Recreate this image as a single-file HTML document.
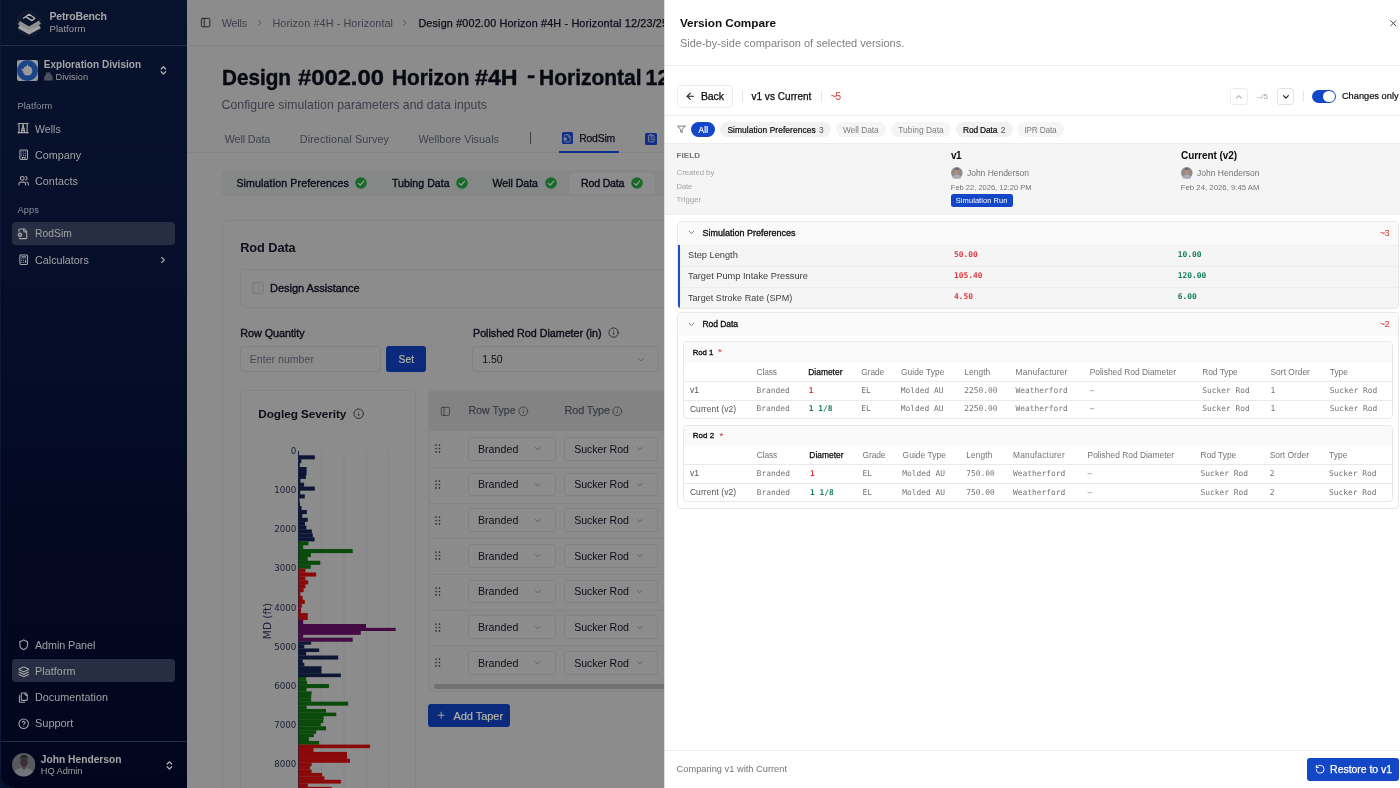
<!DOCTYPE html>
<html lang="en">
<head>
<meta charset="utf-8">
<title>Version Compare</title>
<style>
*{box-sizing:border-box;margin:0;padding:0}
html,body{width:1400px;height:788px;overflow:hidden;background:#8c8c8c;font-family:"Liberation Sans",sans-serif}
.abs,.t,.b{position:absolute}
.t{white-space:pre;z-index:3}
svg{overflow:visible}
#side{position:absolute;left:0;top:0;width:186.5px;height:788px;background:linear-gradient(180deg,#07122d 0%,#06102b 30%,#03071f 75%,#02051e 100%);overflow:hidden}
#side .sin{will-change:transform;position:absolute;left:0;top:0;width:187px;height:788px}
#main{position:absolute;left:186.5px;top:0;width:477.5px;height:788px;background:#8c8c8c;overflow:hidden}
#main .in{will-change:transform;position:absolute;left:-186.5px;top:0;width:1400px;height:788px}
#panel{position:absolute;left:664px;top:0;width:736px;height:788px;background:#fff;overflow:hidden}
#panel .in{will-change:transform;position:absolute;left:-664px;top:0;width:1400px;height:788px}
.ico{position:absolute;fill:none;stroke-linecap:round;stroke-linejoin:round}
.sel{position:absolute;height:23.6px;border:1px solid #818181;border-radius:3px;background:#8c8c8c}
.pill{position:absolute;top:122.3px;height:14.8px;border-radius:8px;background:#f1f1f1}
.hl{position:absolute;background:#ededed;height:1px}
</style>
</head>
<body>
<!-- ================= MAIN (dimmed) ================= -->
<div id="main"><div class="in">
  <div class="b" style="left:186px;top:45px;width:480px;height:1px;background:#838383"></div>
  <div class="b" style="left:186px;top:152px;width:480px;height:1px;background:#838383"></div>
  <div class="b" style="left:558.8px;top:150.8px;width:60.4px;height:2px;background:#0f2d8a"></div>
  <div class="b" style="left:529.6px;top:132px;width:1px;height:12px;background:#3a3a3a"></div>
  <!-- subtabs bar -->
  <div class="b" style="left:221.6px;top:170.4px;width:460px;height:26px;background:#868787;border-radius:4px"></div>
  <div class="b" style="left:568.6px;top:173.4px;width:86px;height:20.6px;background:#8d8d8d;border-radius:4px"></div>
  <!-- card -->
  <div class="b" style="left:221.6px;top:219.8px;width:470px;height:600px;border:1px solid #848484;border-radius:5px;background:#8c8c8c"></div>
  <div class="b" style="left:240.2px;top:269px;width:440px;height:39px;border:1px solid #848484;border-radius:5px"></div>
  <div class="b" style="left:252.2px;top:282.3px;width:11.7px;height:11.7px;border:1px solid #7c7c7c;border-radius:3px;background:#8a8a8a"></div>
  <div class="b" style="left:240.2px;top:346.4px;width:141px;height:25.5px;border:1px solid #818181;border-radius:4px"></div>
  <div class="b" style="left:386.2px;top:346.4px;width:39.6px;height:25.5px;background:#0b2a7c;border-radius:3px"></div>
  <div class="b" style="left:472.4px;top:346.4px;width:186.6px;height:25.5px;border:1px solid #818181;border-radius:4px"></div>
  <!-- dogleg card -->
  <div class="b" style="left:240.2px;top:389.6px;width:176px;height:420px;border:1px solid #848484;border-radius:6px"></div>
  <!-- table -->
  <div class="b" style="left:428.4px;top:389.6px;width:260px;height:302px;border:1px solid #848484;border-radius:5px;overflow:hidden;background:#8b8b8b">
    <div class="b" style="left:0;top:0;width:260px;height:40.6px;background:#838383"></div>
    <div class="b" style="left:0;top:76.3px;width:260px;height:1px;background:#838383"></div>
    <div class="b" style="left:0;top:112px;width:260px;height:1px;background:#838383"></div>
    <div class="b" style="left:0;top:147.6px;width:260px;height:1px;background:#838383"></div>
    <div class="b" style="left:0;top:183.3px;width:260px;height:1px;background:#838383"></div>
    <div class="b" style="left:0;top:219px;width:260px;height:1px;background:#838383"></div>
    <div class="b" style="left:0;top:254.6px;width:260px;height:1px;background:#838383"></div>
    <div class="b" style="left:5px;top:293.6px;width:260px;height:4.8px;background:#717171;border-radius:3px"></div>
  </div>
  <!--ROWS-->
  <div class="b" style="left:428px;top:704px;width:82px;height:23.2px;background:#0b2a7c;border-radius:3px"></div>
  <svg class="ico" style="left:199.6px;top:17.2px;" width="11.2" height="11.2" viewBox="0 0 24 24" stroke="#1c1c1c" stroke-width="1.9"><rect width="18" height="18" x="3" y="3" rx="2"/><path d="M9 3v18"/></svg>
<svg class="ico" style="left:254.6px;top:18.1px;" width="9.5" height="9.5" viewBox="0 0 24 24" stroke="#454545" stroke-width="2"><path d="m9 18 6-6-6-6"/></svg>
<svg class="ico" style="left:400.2px;top:18.1px;" width="9.5" height="9.5" viewBox="0 0 24 24" stroke="#454545" stroke-width="2"><path d="m9 18 6-6-6-6"/></svg>
<div class="b" style="left:561.5px;top:132px;width:11.6px;height:11.8px;background:#0f2d8a;border-radius:1.5px"></div>
<svg class="ico" style="left:563.0px;top:133.6px;" width="8.6" height="8.6" viewBox="0 0 24 24" stroke="#8f8f8f" stroke-width="2.2"><path d="M14 2v4a2 2 0 0 0 2 2h4"/><path d="m3.2 12.9-.9-.4"/><path d="m3.2 15.1-.9.4"/><path d="M4.677 21.5a2 2 0 0 0 1.313.5H18a2 2 0 0 0 2-2V7l-5-5H6a2 2 0 0 0-2 2v2.5"/><path d="m4.9 11.2-.4-.9"/><path d="m4.9 16.8-.4.9"/><path d="m7.5 10.3-.4.9"/><path d="m7.5 17.7-.4-.9"/><path d="m9.7 12.5-.9.4"/><path d="m9.7 15.5-.9-.4"/><circle cx="6" cy="14" r="3"/></svg>
<div class="b" style="left:645.3px;top:132.8px;width:11.6px;height:11.8px;background:#0f2d8a;border-radius:1.5px"></div>
<svg class="ico" style="left:646.8px;top:134.4px;" width="8.6" height="8.6" viewBox="0 0 24 24" stroke="#8f8f8f" stroke-width="2.2"><rect width="8" height="4" x="8" y="2" rx="1" ry="1"/><path d="M16 4h2a2 2 0 0 1 2 2v14a2 2 0 0 1-2 2H6a2 2 0 0 1-2-2V6a2 2 0 0 1 2-2h2"/><path d="M12 11h4M12 16h4M8 11h.01M8 16h.01"/></svg>
<svg class="ico" style="left:355.0px;top:177.3px" width="12" height="12" viewBox="0 0 24 24"><circle cx="12" cy="12" r="11.6" fill="#166b2b"/><path d="m6.8 12.6 3.6 3.6 7-8" stroke="#9f9f9f" stroke-width="2.3" fill="none"/></svg>
<svg class="ico" style="left:455.5px;top:177.3px" width="12" height="12" viewBox="0 0 24 24"><circle cx="12" cy="12" r="11.6" fill="#166b2b"/><path d="m6.8 12.6 3.6 3.6 7-8" stroke="#9f9f9f" stroke-width="2.3" fill="none"/></svg>
<svg class="ico" style="left:544.6px;top:177.3px" width="12" height="12" viewBox="0 0 24 24"><circle cx="12" cy="12" r="11.6" fill="#166b2b"/><path d="m6.8 12.6 3.6 3.6 7-8" stroke="#9f9f9f" stroke-width="2.3" fill="none"/></svg>
<svg class="ico" style="left:630.6px;top:177.3px" width="12" height="12" viewBox="0 0 24 24"><circle cx="12" cy="12" r="11.6" fill="#166b2b"/><path d="m6.8 12.6 3.6 3.6 7-8" stroke="#9f9f9f" stroke-width="2.3" fill="none"/></svg>
<svg class="ico" style="left:608.3px;top:327.3px;" width="11.2" height="11.2" viewBox="0 0 24 24" stroke="#2e2e2e" stroke-width="2.1"><circle cx="12" cy="12" r="10"/><path d="M12 16v-4"/><path d="M12 8h.01"/></svg>
<svg class="ico" style="left:353.1px;top:408.3px;" width="11.4" height="11.4" viewBox="0 0 24 24" stroke="#2e2e2e" stroke-width="2.1"><circle cx="12" cy="12" r="10"/><path d="M12 16v-4"/><path d="M12 8h.01"/></svg>
<svg class="ico" style="left:636.2px;top:354.6px;" width="9.6" height="9.6" viewBox="0 0 24 24" stroke="#555" stroke-width="2"><path d="m6 9 6 6 6-6"/></svg>
<svg class="ico" style="left:439.5px;top:405.6px;" width="10.8" height="10.8" viewBox="0 0 24 24" stroke="#3a3a3a" stroke-width="1.9"><rect width="18" height="18" x="3" y="3" rx="2"/><path d="M9 3v18"/></svg>
<svg class="ico" style="left:518.4px;top:405.7px;" width="10.6" height="10.6" viewBox="0 0 24 24" stroke="#3a3a3a" stroke-width="1.9"><circle cx="12" cy="12" r="10"/><path d="M12 16v-4"/><path d="M12 8h.01"/></svg>
<svg class="ico" style="left:612.3px;top:405.7px;" width="10.6" height="10.6" viewBox="0 0 24 24" stroke="#3a3a3a" stroke-width="1.9"><circle cx="12" cy="12" r="10"/><path d="M12 16v-4"/><path d="M12 8h.01"/></svg>
<div class="sel" style="left:468.3px;top:437.1px;width:87.3px"></div>
<div class="sel" style="left:564.4px;top:437.1px;width:93.3px"></div>
<svg class="ico" style="left:532.8px;top:444.3px;" width="9.4" height="9.4" viewBox="0 0 24 24" stroke="#555" stroke-width="2"><path d="m6 9 6 6 6-6"/></svg>
<svg class="ico" style="left:634.8px;top:444.3px;" width="9.4" height="9.4" viewBox="0 0 24 24" stroke="#555" stroke-width="2"><path d="m6 9 6 6 6-6"/></svg>
<svg class="ico" style="left:434.8px;top:444.3px;fill:#2e2e2e;stroke:none" width="5.6" height="9" viewBox="0 0 5.6 9"><circle cx="1.1" cy="1.1" r="0.85"/><circle cx="1.1" cy="4.5" r="0.85"/><circle cx="1.1" cy="7.9" r="0.85"/><circle cx="4.5" cy="1.1" r="0.85"/><circle cx="4.5" cy="4.5" r="0.85"/><circle cx="4.5" cy="7.9" r="0.85"/></svg>
<div class="sel" style="left:468.3px;top:472.8px;width:87.3px"></div>
<div class="sel" style="left:564.4px;top:472.8px;width:93.3px"></div>
<svg class="ico" style="left:532.8px;top:480.0px;" width="9.4" height="9.4" viewBox="0 0 24 24" stroke="#555" stroke-width="2"><path d="m6 9 6 6 6-6"/></svg>
<svg class="ico" style="left:634.8px;top:480.0px;" width="9.4" height="9.4" viewBox="0 0 24 24" stroke="#555" stroke-width="2"><path d="m6 9 6 6 6-6"/></svg>
<svg class="ico" style="left:434.8px;top:480.0px;fill:#2e2e2e;stroke:none" width="5.6" height="9" viewBox="0 0 5.6 9"><circle cx="1.1" cy="1.1" r="0.85"/><circle cx="1.1" cy="4.5" r="0.85"/><circle cx="1.1" cy="7.9" r="0.85"/><circle cx="4.5" cy="1.1" r="0.85"/><circle cx="4.5" cy="4.5" r="0.85"/><circle cx="4.5" cy="7.9" r="0.85"/></svg>
<div class="sel" style="left:468.3px;top:508.4px;width:87.3px"></div>
<div class="sel" style="left:564.4px;top:508.4px;width:93.3px"></div>
<svg class="ico" style="left:532.8px;top:515.6px;" width="9.4" height="9.4" viewBox="0 0 24 24" stroke="#555" stroke-width="2"><path d="m6 9 6 6 6-6"/></svg>
<svg class="ico" style="left:634.8px;top:515.6px;" width="9.4" height="9.4" viewBox="0 0 24 24" stroke="#555" stroke-width="2"><path d="m6 9 6 6 6-6"/></svg>
<svg class="ico" style="left:434.8px;top:515.6px;fill:#2e2e2e;stroke:none" width="5.6" height="9" viewBox="0 0 5.6 9"><circle cx="1.1" cy="1.1" r="0.85"/><circle cx="1.1" cy="4.5" r="0.85"/><circle cx="1.1" cy="7.9" r="0.85"/><circle cx="4.5" cy="1.1" r="0.85"/><circle cx="4.5" cy="4.5" r="0.85"/><circle cx="4.5" cy="7.9" r="0.85"/></svg>
<div class="sel" style="left:468.3px;top:544.1px;width:87.3px"></div>
<div class="sel" style="left:564.4px;top:544.1px;width:93.3px"></div>
<svg class="ico" style="left:532.8px;top:551.3px;" width="9.4" height="9.4" viewBox="0 0 24 24" stroke="#555" stroke-width="2"><path d="m6 9 6 6 6-6"/></svg>
<svg class="ico" style="left:634.8px;top:551.3px;" width="9.4" height="9.4" viewBox="0 0 24 24" stroke="#555" stroke-width="2"><path d="m6 9 6 6 6-6"/></svg>
<svg class="ico" style="left:434.8px;top:551.3px;fill:#2e2e2e;stroke:none" width="5.6" height="9" viewBox="0 0 5.6 9"><circle cx="1.1" cy="1.1" r="0.85"/><circle cx="1.1" cy="4.5" r="0.85"/><circle cx="1.1" cy="7.9" r="0.85"/><circle cx="4.5" cy="1.1" r="0.85"/><circle cx="4.5" cy="4.5" r="0.85"/><circle cx="4.5" cy="7.9" r="0.85"/></svg>
<div class="sel" style="left:468.3px;top:579.7px;width:87.3px"></div>
<div class="sel" style="left:564.4px;top:579.7px;width:93.3px"></div>
<svg class="ico" style="left:532.8px;top:586.9px;" width="9.4" height="9.4" viewBox="0 0 24 24" stroke="#555" stroke-width="2"><path d="m6 9 6 6 6-6"/></svg>
<svg class="ico" style="left:634.8px;top:586.9px;" width="9.4" height="9.4" viewBox="0 0 24 24" stroke="#555" stroke-width="2"><path d="m6 9 6 6 6-6"/></svg>
<svg class="ico" style="left:434.8px;top:586.9px;fill:#2e2e2e;stroke:none" width="5.6" height="9" viewBox="0 0 5.6 9"><circle cx="1.1" cy="1.1" r="0.85"/><circle cx="1.1" cy="4.5" r="0.85"/><circle cx="1.1" cy="7.9" r="0.85"/><circle cx="4.5" cy="1.1" r="0.85"/><circle cx="4.5" cy="4.5" r="0.85"/><circle cx="4.5" cy="7.9" r="0.85"/></svg>
<div class="sel" style="left:468.3px;top:615.4px;width:87.3px"></div>
<div class="sel" style="left:564.4px;top:615.4px;width:93.3px"></div>
<svg class="ico" style="left:532.8px;top:622.6px;" width="9.4" height="9.4" viewBox="0 0 24 24" stroke="#555" stroke-width="2"><path d="m6 9 6 6 6-6"/></svg>
<svg class="ico" style="left:634.8px;top:622.6px;" width="9.4" height="9.4" viewBox="0 0 24 24" stroke="#555" stroke-width="2"><path d="m6 9 6 6 6-6"/></svg>
<svg class="ico" style="left:434.8px;top:622.6px;fill:#2e2e2e;stroke:none" width="5.6" height="9" viewBox="0 0 5.6 9"><circle cx="1.1" cy="1.1" r="0.85"/><circle cx="1.1" cy="4.5" r="0.85"/><circle cx="1.1" cy="7.9" r="0.85"/><circle cx="4.5" cy="1.1" r="0.85"/><circle cx="4.5" cy="4.5" r="0.85"/><circle cx="4.5" cy="7.9" r="0.85"/></svg>
<div class="sel" style="left:468.3px;top:651.1px;width:87.3px"></div>
<div class="sel" style="left:564.4px;top:651.1px;width:93.3px"></div>
<svg class="ico" style="left:532.8px;top:658.3px;" width="9.4" height="9.4" viewBox="0 0 24 24" stroke="#555" stroke-width="2"><path d="m6 9 6 6 6-6"/></svg>
<svg class="ico" style="left:634.8px;top:658.3px;" width="9.4" height="9.4" viewBox="0 0 24 24" stroke="#555" stroke-width="2"><path d="m6 9 6 6 6-6"/></svg>
<svg class="ico" style="left:434.8px;top:658.3px;fill:#2e2e2e;stroke:none" width="5.6" height="9" viewBox="0 0 5.6 9"><circle cx="1.1" cy="1.1" r="0.85"/><circle cx="1.1" cy="4.5" r="0.85"/><circle cx="1.1" cy="7.9" r="0.85"/><circle cx="4.5" cy="1.1" r="0.85"/><circle cx="4.5" cy="4.5" r="0.85"/><circle cx="4.5" cy="7.9" r="0.85"/></svg>
<svg class="ico" style="left:436.2px;top:710.3px;" width="10.4" height="10.4" viewBox="0 0 24 24" stroke="#b4b4a4" stroke-width="2"><path d="M5 12h14"/><path d="M12 5v14"/></svg>
  <svg style="position:absolute;left:240px;top:430px" width="176" height="358" viewBox="240 430 176 358">
<rect x="321" y="451" width="1" height="340" fill="#848484"/>
<rect x="343.5" y="451" width="1" height="340" fill="#848484"/>
<rect x="366" y="451" width="1" height="340" fill="#848484"/>
<rect x="388.5" y="451" width="1" height="340" fill="#848484"/>
<rect x="298.0" y="451" width="1" height="340" fill="#1a2140"/>
<rect x="298.6" y="455.31" width="16.22" height="4.06" fill="#0d1633"/>
<rect x="298.6" y="459.21" width="2.74" height="4.06" fill="#0d1633"/>
<rect x="298.6" y="463.12" width="1.14" height="4.06" fill="#0d1633"/>
<rect x="298.6" y="467.02" width="7.99" height="4.06" fill="#0d1633"/>
<rect x="298.6" y="470.93" width="7.99" height="4.06" fill="#0d1633"/>
<rect x="298.6" y="474.84" width="7.31" height="4.06" fill="#0d1633"/>
<rect x="298.6" y="478.74" width="1.83" height="4.06" fill="#0d1633"/>
<rect x="298.6" y="482.65" width="5.48" height="4.06" fill="#0d1633"/>
<rect x="298.6" y="486.55" width="16.22" height="4.06" fill="#0d1633"/>
<rect x="298.6" y="490.46" width="1.60" height="4.06" fill="#0d1633"/>
<rect x="298.6" y="494.36" width="6.17" height="4.06" fill="#0d1633"/>
<rect x="298.6" y="498.27" width="0.91" height="4.06" fill="#0d1633"/>
<rect x="298.6" y="502.18" width="1.37" height="4.06" fill="#0d1633"/>
<rect x="298.6" y="506.08" width="2.97" height="4.06" fill="#0d1633"/>
<rect x="298.6" y="509.99" width="8.22" height="4.06" fill="#0d1633"/>
<rect x="298.6" y="513.89" width="3.65" height="4.06" fill="#0d1633"/>
<rect x="298.6" y="517.80" width="9.14" height="4.06" fill="#0d1633"/>
<rect x="298.6" y="521.71" width="6.40" height="4.06" fill="#0d1633"/>
<rect x="298.6" y="525.61" width="7.77" height="4.06" fill="#0d1633"/>
<rect x="298.6" y="529.52" width="13.25" height="4.06" fill="#0d1633"/>
<rect x="298.6" y="533.42" width="14.16" height="4.06" fill="#0d1633"/>
<rect x="298.6" y="537.33" width="15.99" height="4.06" fill="#0d1633"/>
<rect x="298.6" y="541.24" width="9.82" height="4.06" fill="#0a4a0a"/>
<rect x="298.6" y="545.14" width="4.57" height="4.06" fill="#0a4a0a"/>
<rect x="298.6" y="549.05" width="54.13" height="4.06" fill="#0a4a0a"/>
<rect x="298.6" y="552.95" width="12.33" height="4.06" fill="#0a4a0a"/>
<rect x="298.6" y="556.86" width="9.14" height="4.06" fill="#0a4a0a"/>
<rect x="298.6" y="560.77" width="21.70" height="4.06" fill="#0a4a0a"/>
<rect x="298.6" y="564.67" width="12.11" height="4.06" fill="#0a4a0a"/>
<rect x="298.6" y="568.58" width="6.85" height="4.06" fill="#8b0909"/>
<rect x="298.6" y="572.48" width="17.59" height="4.06" fill="#8b0909"/>
<rect x="298.6" y="576.39" width="6.85" height="4.06" fill="#8b0909"/>
<rect x="298.6" y="580.29" width="9.59" height="4.06" fill="#8b0909"/>
<rect x="298.6" y="584.20" width="6.85" height="4.06" fill="#8b0909"/>
<rect x="298.6" y="588.11" width="5.03" height="4.06" fill="#8b0909"/>
<rect x="298.6" y="592.01" width="1.83" height="4.06" fill="#8b0909"/>
<rect x="298.6" y="595.92" width="4.11" height="4.06" fill="#8b0909"/>
<rect x="298.6" y="599.82" width="6.17" height="4.06" fill="#8b0909"/>
<rect x="298.6" y="603.73" width="3.20" height="4.06" fill="#8b0909"/>
<rect x="298.6" y="607.64" width="2.28" height="4.06" fill="#8b0909"/>
<rect x="298.6" y="611.54" width="1.83" height="4.06" fill="#8b0909"/>
<rect x="298.6" y="608.00" width="2.28" height="4.72" fill="#8b0909"/>
<rect x="298.6" y="613.03" width="9.14" height="7.00" fill="#8b0909"/>
<rect x="298.6" y="619.88" width="4.57" height="4.26" fill="#430a43"/>
<rect x="298.6" y="623.99" width="67.38" height="4.03" fill="#430a43"/>
<rect x="298.6" y="627.87" width="97.08" height="3.12" fill="#430a43"/>
<rect x="298.6" y="630.84" width="62.13" height="4.03" fill="#430a43"/>
<rect x="298.6" y="634.72" width="4.57" height="3.12" fill="#430a43"/>
<rect x="298.6" y="637.69" width="54.13" height="4.03" fill="#430a43"/>
<rect x="298.6" y="641.58" width="12.56" height="3.12" fill="#0d1633"/>
<rect x="298.6" y="644.55" width="5.71" height="4.03" fill="#0d1633"/>
<rect x="298.6" y="648.43" width="20.56" height="3.58" fill="#0d1633"/>
<rect x="298.6" y="651.86" width="7.54" height="3.80" fill="#0d1633"/>
<rect x="298.6" y="655.51" width="39.52" height="4.03" fill="#0d1633"/>
<rect x="298.6" y="659.39" width="4.11" height="3.58" fill="#0d1633"/>
<rect x="298.6" y="662.82" width="5.71" height="3.58" fill="#0d1633"/>
<rect x="298.6" y="666.25" width="22.84" height="7.46" fill="#0d1633"/>
<rect x="298.6" y="673.56" width="42.26" height="3.58" fill="#0d1633"/>
<rect x="298.6" y="676.98" width="7.54" height="3.80" fill="#0a4a0a"/>
<rect x="298.6" y="680.64" width="8.45" height="3.58" fill="#0a4a0a"/>
<rect x="298.6" y="684.06" width="30.38" height="4.03" fill="#0a4a0a"/>
<rect x="298.6" y="687.95" width="7.99" height="3.58" fill="#0a4a0a"/>
<rect x="298.6" y="691.37" width="13.02" height="3.58" fill="#0a4a0a"/>
<rect x="298.6" y="694.80" width="12.56" height="3.58" fill="#0a4a0a"/>
<rect x="298.6" y="698.22" width="12.56" height="3.58" fill="#0a4a0a"/>
<rect x="298.6" y="701.65" width="49.57" height="4.03" fill="#0a4a0a"/>
<rect x="298.6" y="705.53" width="7.99" height="3.58" fill="#0a4a0a"/>
<rect x="298.6" y="708.96" width="27.41" height="3.80" fill="#0a4a0a"/>
<rect x="298.6" y="712.61" width="37.69" height="3.58" fill="#0a4a0a"/>
<rect x="298.6" y="716.04" width="25.13" height="3.58" fill="#0a4a0a"/>
<rect x="298.6" y="719.47" width="24.67" height="3.58" fill="#0a4a0a"/>
<rect x="298.6" y="722.89" width="22.16" height="3.58" fill="#0a4a0a"/>
<rect x="298.6" y="726.32" width="27.41" height="4.03" fill="#0a4a0a"/>
<rect x="298.6" y="730.20" width="17.59" height="3.58" fill="#0a4a0a"/>
<rect x="298.6" y="733.63" width="15.30" height="3.58" fill="#0a4a0a"/>
<rect x="298.6" y="737.05" width="10.28" height="4.03" fill="#0a4a0a"/>
<rect x="298.6" y="740.94" width="20.56" height="3.80" fill="#0a4a0a"/>
<rect x="298.6" y="744.59" width="71.49" height="3.58" fill="#8b0909"/>
<rect x="298.6" y="748.02" width="14.85" height="4.03" fill="#8b0909"/>
<rect x="298.6" y="751.90" width="48.42" height="7.00" fill="#8b0909"/>
<rect x="298.6" y="758.75" width="51.39" height="4.03" fill="#8b0909"/>
<rect x="298.6" y="762.64" width="13.02" height="3.58" fill="#8b0909"/>
<rect x="298.6" y="766.06" width="11.42" height="3.58" fill="#8b0909"/>
<rect x="298.6" y="769.49" width="13.02" height="3.58" fill="#8b0909"/>
<rect x="298.6" y="772.92" width="23.53" height="3.58" fill="#8b0909"/>
<rect x="298.6" y="776.34" width="25.81" height="3.58" fill="#8b0909"/>
<rect x="298.6" y="779.77" width="42.26" height="3.80" fill="#8b0909"/>
<rect x="298.6" y="783.42" width="9.14" height="3.58" fill="#8b0909"/>
<rect x="298.6" y="786.85" width="33.12" height="4.03" fill="#8b0909"/>
<text x="296.3" y="454.3" text-anchor="end" font-family="DejaVu Sans, sans-serif" font-size="8.7" fill="#1a1f33">0</text>
<text x="296.3" y="493.3" text-anchor="end" font-family="DejaVu Sans, sans-serif" font-size="8.7" fill="#1a1f33">1000</text>
<text x="296.3" y="532.4" text-anchor="end" font-family="DejaVu Sans, sans-serif" font-size="8.7" fill="#1a1f33">2000</text>
<text x="296.3" y="571.4" text-anchor="end" font-family="DejaVu Sans, sans-serif" font-size="8.7" fill="#1a1f33">3000</text>
<text x="296.3" y="610.5" text-anchor="end" font-family="DejaVu Sans, sans-serif" font-size="8.7" fill="#1a1f33">4000</text>
<text x="296.3" y="649.5" text-anchor="end" font-family="DejaVu Sans, sans-serif" font-size="8.7" fill="#1a1f33">5000</text>
<text x="296.3" y="688.6" text-anchor="end" font-family="DejaVu Sans, sans-serif" font-size="8.7" fill="#1a1f33">6000</text>
<text x="296.3" y="727.6" text-anchor="end" font-family="DejaVu Sans, sans-serif" font-size="8.7" fill="#1a1f33">7000</text>
<text x="296.3" y="766.7" text-anchor="end" font-family="DejaVu Sans, sans-serif" font-size="8.7" fill="#1a1f33">8000</text>
<text transform="translate(270.9,621) rotate(-90)" text-anchor="middle" font-family="DejaVu Sans, sans-serif" font-size="10.5" fill="#1a1f33">MD (ft)</text>
</svg>
  <div class="t" style="left:221.7px;top:17.6px;font:400 10.8px/11.8px 'Liberation Sans', sans-serif;color:#3e414c;letter-spacing:-0.201px;">Wells</div>
<div class="t" style="left:272.4px;top:17.6px;font:400 10.8px/11.8px 'Liberation Sans', sans-serif;color:#3e414c;letter-spacing:0.104px;">Horizon #4H - Horizontal</div>
<div class="t" style="left:418.4px;top:17.6px;font:400 10.8px/11.8px 'Liberation Sans', sans-serif;color:#0c0e18;letter-spacing:0.164px;-webkit-text-stroke:.25px #0c0e18;">Design #002.00 Horizon #4H - Horizontal 12/23/25</div>
<div class="t" style="left:221.9px;top:66.8px;font:700 21.25px/22.25px 'Liberation Sans', sans-serif;color:#080a12;transform:scaleX(0.9738);transform-origin:0 50%;-webkit-text-stroke:.4px #080a12;">Design</div>
<div class="t" style="left:298.0px;top:66.8px;font:700 21.25px/22.25px 'Liberation Sans', sans-serif;color:#080a12;transform:scaleX(1.1181);transform-origin:0 50%;-webkit-text-stroke:.4px #080a12;">#002.00</div>
<div class="t" style="left:391.6px;top:66.8px;font:700 21.25px/22.25px 'Liberation Sans', sans-serif;color:#080a12;transform:scaleX(0.9786);transform-origin:0 50%;-webkit-text-stroke:.4px #080a12;">Horizon</div>
<div class="t" style="left:475.4px;top:66.8px;font:700 21.25px/22.25px 'Liberation Sans', sans-serif;color:#080a12;transform:scaleX(1.0927);transform-origin:0 50%;-webkit-text-stroke:.4px #080a12;">#4H</div>
<div class="t" style="left:526.6px;top:64.1px;font:700 21.25px/22.25px 'Liberation Sans', sans-serif;color:#080a12;transform:scaleX(1.1585);transform-origin:0 50%;-webkit-text-stroke:.4px #080a12;">-</div>
<div class="t" style="left:539.0px;top:66.8px;font:700 21.25px/22.25px 'Liberation Sans', sans-serif;color:#080a12;transform:scaleX(0.9876);transform-origin:0 50%;-webkit-text-stroke:.4px #080a12;">Horizontal</div>
<div class="t" style="left:645.6px;top:66.8px;font:700 21.25px/22.25px 'Liberation Sans', sans-serif;color:#080a12;letter-spacing:0.2px;-webkit-text-stroke:.4px #080a12;">12/23/25</div>
<div class="t" style="left:221.6px;top:99.0px;font:400 12.25px/13.25px 'Liberation Sans', sans-serif;color:#3e414c;letter-spacing:0.026px;">Configure simulation parameters and data inputs</div>
<div class="t" style="left:224.7px;top:133.8px;font:400 10.8px/11.8px 'Liberation Sans', sans-serif;color:#3e414c;letter-spacing:-0.126px;">Well Data</div>
<div class="t" style="left:299.8px;top:133.8px;font:400 10.8px/11.8px 'Liberation Sans', sans-serif;color:#3e414c;letter-spacing:0.094px;">Directional Survey</div>
<div class="t" style="left:418.4px;top:133.8px;font:400 10.8px/11.8px 'Liberation Sans', sans-serif;color:#3e414c;letter-spacing:0.038px;">Wellbore Visuals</div>
<div class="t" style="left:579.2px;top:133.3px;font:400 10.4px/11.4px 'Liberation Sans', sans-serif;color:#0c0e18;letter-spacing:-0.194px;-webkit-text-stroke:.25px #0c0e18;">RodSim</div>
<div class="t" style="left:236.4px;top:178.2px;font:400 10.6px/11.6px 'Liberation Sans', sans-serif;color:#0c0e18;letter-spacing:0.137px;-webkit-text-stroke:.38px #0c0e18;">Simulation Preferences</div>
<div class="t" style="left:392.0px;top:178.2px;font:400 10.6px/11.6px 'Liberation Sans', sans-serif;color:#0c0e18;letter-spacing:0.027px;-webkit-text-stroke:.38px #0c0e18;">Tubing Data</div>
<div class="t" style="left:492.5px;top:178.2px;font:400 10.6px/11.6px 'Liberation Sans', sans-serif;color:#0c0e18;letter-spacing:-0.029px;-webkit-text-stroke:.38px #0c0e18;">Well Data</div>
<div class="t" style="left:581.0px;top:178.2px;font:400 10.6px/11.6px 'Liberation Sans', sans-serif;color:#0c0e18;letter-spacing:-0.181px;-webkit-text-stroke:.38px #0c0e18;">Rod Data</div>
<div class="t" style="left:240.2px;top:241.0px;font:700 12.75px/13.75px 'Liberation Sans', sans-serif;color:#0d0f18;letter-spacing:-0.067px;">Rod Data</div>
<div class="t" style="left:270.0px;top:282.1px;font:400 11.0px/12.0px 'Liberation Sans', sans-serif;color:#0c0e18;letter-spacing:-0.024px;-webkit-text-stroke:.38px #0c0e18;">Design Assistance</div>
<div class="t" style="left:240.2px;top:327.5px;font:400 10.75px/11.75px 'Liberation Sans', sans-serif;color:#0c0e18;letter-spacing:-0.012px;-webkit-text-stroke:.38px #0c0e18;">Row Quantity</div>
<div class="t" style="left:249.8px;top:354.4px;font:400 10.5px/11.5px 'Liberation Sans', sans-serif;color:#474a55;letter-spacing:0.043px;">Enter number</div>
<div class="t" style="left:398.5px;top:354.4px;font:400 10.25px/11.25px 'Liberation Sans', sans-serif;color:#b4b4a4;letter-spacing:0.055px;-webkit-text-stroke:.2px #b4b4a4;">Set</div>
<div class="t" style="left:473.0px;top:327.7px;font:400 10.75px/11.75px 'Liberation Sans', sans-serif;color:#0c0e18;letter-spacing:-0.022px;-webkit-text-stroke:.38px #0c0e18;">Polished Rod Diameter (in)</div>
<div class="t" style="left:482.2px;top:354.2px;font:400 10.5px/11.5px 'Liberation Sans', sans-serif;color:#0c0e18;">1.50</div>
<div class="t" style="left:258.3px;top:408.3px;font:700 11.75px/12.75px 'Liberation Sans', sans-serif;color:#0d0f18;letter-spacing:-0.051px;">Dogleg Severity</div>
<div class="t" style="left:468.5px;top:405.4px;font:400 10.5px/11.5px 'Liberation Sans', sans-serif;color:#3a3d48;letter-spacing:0.071px;-webkit-text-stroke:.25px #3a3d48;">Row Type</div>
<div class="t" style="left:564.5px;top:405.2px;font:400 10.75px/11.75px 'Liberation Sans', sans-serif;color:#3a3d48;letter-spacing:-0.047px;-webkit-text-stroke:.25px #3a3d48;">Rod Type</div>
<div class="t" style="left:477.9px;top:443.7px;font:400 10.6px/11.6px 'Liberation Sans', sans-serif;color:#0c0e18;letter-spacing:0.056px;">Branded</div>
<div class="t" style="left:574.3px;top:443.7px;font:400 10.6px/11.6px 'Liberation Sans', sans-serif;color:#0c0e18;letter-spacing:-0.084px;">Sucker Rod</div>
<div class="t" style="left:477.9px;top:479.4px;font:400 10.6px/11.6px 'Liberation Sans', sans-serif;color:#0c0e18;letter-spacing:0.056px;">Branded</div>
<div class="t" style="left:574.3px;top:479.4px;font:400 10.6px/11.6px 'Liberation Sans', sans-serif;color:#0c0e18;letter-spacing:-0.084px;">Sucker Rod</div>
<div class="t" style="left:477.9px;top:515.0px;font:400 10.6px/11.6px 'Liberation Sans', sans-serif;color:#0c0e18;letter-spacing:0.056px;">Branded</div>
<div class="t" style="left:574.3px;top:515.0px;font:400 10.6px/11.6px 'Liberation Sans', sans-serif;color:#0c0e18;letter-spacing:-0.084px;">Sucker Rod</div>
<div class="t" style="left:477.9px;top:550.7px;font:400 10.6px/11.6px 'Liberation Sans', sans-serif;color:#0c0e18;letter-spacing:0.056px;">Branded</div>
<div class="t" style="left:574.3px;top:550.7px;font:400 10.6px/11.6px 'Liberation Sans', sans-serif;color:#0c0e18;letter-spacing:-0.084px;">Sucker Rod</div>
<div class="t" style="left:477.9px;top:586.3px;font:400 10.6px/11.6px 'Liberation Sans', sans-serif;color:#0c0e18;letter-spacing:0.056px;">Branded</div>
<div class="t" style="left:574.3px;top:586.3px;font:400 10.6px/11.6px 'Liberation Sans', sans-serif;color:#0c0e18;letter-spacing:-0.084px;">Sucker Rod</div>
<div class="t" style="left:477.9px;top:622.0px;font:400 10.6px/11.6px 'Liberation Sans', sans-serif;color:#0c0e18;letter-spacing:0.056px;">Branded</div>
<div class="t" style="left:574.3px;top:622.0px;font:400 10.6px/11.6px 'Liberation Sans', sans-serif;color:#0c0e18;letter-spacing:-0.084px;">Sucker Rod</div>
<div class="t" style="left:477.9px;top:657.7px;font:400 10.6px/11.6px 'Liberation Sans', sans-serif;color:#0c0e18;letter-spacing:0.056px;">Branded</div>
<div class="t" style="left:574.3px;top:657.7px;font:400 10.6px/11.6px 'Liberation Sans', sans-serif;color:#0c0e18;letter-spacing:-0.084px;">Sucker Rod</div>
<div class="t" style="left:453.4px;top:710.0px;font:400 11.0px/12.0px 'Liberation Sans', sans-serif;color:#b4b4a4;letter-spacing:-0.032px;-webkit-text-stroke:.2px #b4b4a4;">Add Taper</div>
</div></div>

<!-- ================= SIDEBAR ================= -->
<div id="side"><div class="sin">
  <div class="b" style="left:0;top:45.2px;width:187px;height:1px;background:#252d42"></div>
  <div class="b" style="left:0;top:741px;width:187px;height:1px;background:#252d42"></div>
  <div class="b" style="left:11.9px;top:222px;width:163px;height:23px;background:#272e43;border-radius:4px"></div>
  <div class="b" style="left:11.9px;top:659.3px;width:163px;height:23.2px;background:#272e43;border-radius:4px"></div>
  <svg class="ico" style="left:17.1px;top:122.4px;" width="12.2" height="12.2" viewBox="0 0 24 24" stroke="#a6a6a6" stroke-width="2.3"><path d="M2 3h20"/><path d="M2 21h20"/><path d="M4 3v18"/><path d="M20 3v18"/><path d="M12 6 8.5 21"/><path d="M12 6l3.5 15"/><path d="M10 13h4"/><path d="M9.2 17h5.6"/><path d="M12 3v3"/></svg>
<svg class="ico" style="left:17.8px;top:149.2px;" width="11.4" height="11.4" viewBox="0 0 24 24" stroke="#a6a6a6" stroke-width="2.3"><rect width="16" height="20" x="4" y="2" rx="2" ry="2"/><path d="M9 22v-4h6v4"/><path d="M8 6h.01M16 6h.01M12 6h.01M12 10h.01M12 14h.01M16 10h.01M16 14h.01M8 10h.01M8 14h.01"/></svg>
<svg class="ico" style="left:17.7px;top:175.3px;" width="11.4" height="11.4" viewBox="0 0 24 24" stroke="#a6a6a6" stroke-width="2.3"><path d="M16 21v-2a4 4 0 0 0-4-4H6a4 4 0 0 0-4 4v2"/><circle cx="9" cy="7" r="4"/><path d="M22 21v-2a4 4 0 0 0-3-3.87"/><path d="M16 3.13a4 4 0 0 1 0 7.75"/></svg>
<svg class="ico" style="left:17.4px;top:227.8px;" width="11.6" height="11.6" viewBox="0 0 24 24" stroke="#a6a6a6" stroke-width="2.3"><path d="M14 2v4a2 2 0 0 0 2 2h4"/><path d="m3.2 12.9-.9-.4"/><path d="m3.2 15.1-.9.4"/><path d="M4.677 21.5a2 2 0 0 0 1.313.5H18a2 2 0 0 0 2-2V7l-5-5H6a2 2 0 0 0-2 2v2.5"/><path d="m4.9 11.2-.4-.9"/><path d="m4.9 16.8-.4.9"/><path d="m7.5 10.3-.4.9"/><path d="m7.5 17.7-.4-.9"/><path d="m9.7 12.5-.9.4"/><path d="m9.7 15.5-.9-.4"/><circle cx="6" cy="14" r="3"/></svg>
<svg class="ico" style="left:17.8px;top:254.1px;" width="11.4" height="11.4" viewBox="0 0 24 24" stroke="#a6a6a6" stroke-width="2.3"><rect width="16" height="20" x="4" y="2" rx="2"/><line x1="8" x2="16" y1="6" y2="6"/><line x1="16" x2="16" y1="14" y2="18"/><path d="M16 10h.01M12 10h.01M8 10h.01M12 14h.01M8 14h.01M12 18h.01M8 18h.01"/></svg>
<svg class="ico" style="left:158.4px;top:255.0px;" width="10" height="10" viewBox="0 0 24 24" stroke="#b0b0b0" stroke-width="2.6"><path d="m9 18 6-6-6-6"/></svg>
<svg class="ico" style="left:17.6px;top:639.1px;" width="11.4" height="11.4" viewBox="0 0 24 24" stroke="#a6a6a6" stroke-width="2.3"><path d="M20 13c0 5-3.5 7.5-7.66 8.95a1 1 0 0 1-.67-.01C7.5 20.5 4 18 4 13V6a1 1 0 0 1 1-1c2 0 4.5-1.2 6.24-2.72a1.17 1.17 0 0 1 1.52 0C14.51 3.81 17 5 19 5a1 1 0 0 1 1 1z"/></svg>
<svg class="ico" style="left:17.6px;top:665.6px;" width="11.6" height="11.6" viewBox="0 0 24 24" stroke="#a6a6a6" stroke-width="2.3"><path d="m12.83 2.18a2 2 0 0 0-1.66 0L2.6 6.08a1 1 0 0 0 0 1.83l8.58 3.91a2 2 0 0 0 1.66 0l8.58-3.9a1 1 0 0 0 0-1.83Z"/><path d="m22 17.65-9.17 4.16a2 2 0 0 1-1.66 0L2 17.65"/><path d="m22 12.65-9.17 4.16a2 2 0 0 1-1.66 0L2 12.65"/></svg>
<svg class="ico" style="left:17.6px;top:691.8px;" width="11.2" height="11.2" viewBox="0 0 24 24" stroke="#a6a6a6" stroke-width="2.3"><path d="M20 7h-3a2 2 0 0 1-2-2V2"/><path d="M9 18a2 2 0 0 1-2-2V4a2 2 0 0 1 2-2h7l4 4v10a2 2 0 0 1-2 2Z"/><path d="M3 7.6v12.8A1.6 1.6 0 0 0 4.6 22h9.8"/></svg>
<svg class="ico" style="left:17.7px;top:717.9px;" width="11.4" height="11.4" viewBox="0 0 24 24" stroke="#a6a6a6" stroke-width="2.3"><circle cx="12" cy="12" r="10"/><path d="M9.09 9a3 3 0 0 1 5.83 1c0 2-3 3-3 3"/><path d="M12 17h.01"/></svg>
<svg class="ico" style="left:157.9px;top:65.0px;" width="10.8" height="10.8" viewBox="0 0 24 24" stroke="#b0b0b0" stroke-width="2.7"><path d="m7 15 5 5 5-5"/><path d="m7 9 5-5 5 5"/></svg>
<svg class="ico" style="left:164.0px;top:759.8px;" width="10.8" height="10.8" viewBox="0 0 24 24" stroke="#b0b0b0" stroke-width="2.7"><path d="m7 15 5 5 5-5"/><path d="m7 9 5-5 5 5"/></svg>
<svg class="ico" style="left:17px;top:11px" width="25" height="25" viewBox="17 11 25 25">
<circle cx="29.1" cy="23.4" r="12" fill="none" stroke="#5a5650" stroke-width="0.8" stroke-dasharray="0.8 2.1" opacity=".6"/>
<circle cx="29.1" cy="23.4" r="10.4" fill="none" stroke="#5a5650" stroke-width="0.8" stroke-dasharray="0.8 2.4" opacity=".55"/>
<circle cx="29.1" cy="23.4" r="8.8" fill="none" stroke="#5a5650" stroke-width="0.7" stroke-dasharray="0.7 2.6" opacity=".4"/>
<path d="M18.9 22.6 29.1 28.6 39.9 22.2" stroke="#8f8f8f" stroke-width="3.8" stroke-linejoin="miter" stroke-linecap="butt" fill="none"/>
<path d="M18.9 26.6 29.1 32.4 39.9 26.6" stroke="#a2a2a2" stroke-width="3.8" stroke-linejoin="miter" stroke-linecap="butt" fill="none"/>
<path d="M23.5 18.2 29.1 14.3 34.9 18.3 31.8 20.6 25.9 16.6" stroke="#b6b6b6" stroke-width="1.35" stroke-linejoin="round" stroke-linecap="round" fill="none"/>
</svg>
<svg class="ico" style="left:17.1px;top:60px" width="21" height="21" viewBox="0 0 21 21">
<rect width="21" height="21" rx="2.2" fill="#9a9a9a"/>
<circle cx="10.5" cy="10.6" r="7.5" fill="none" stroke="#1b4587" stroke-width="6"/>
<circle cx="10.6" cy="10.9" r="4.7" fill="#9a9a9a"/>
<path d="M10.5 3.2 11.4 7 9.6 7Z M3.6 9.6 7 9 6.6 11.6Z" fill="#9a9a9a"/>
</svg>
<svg class="ico" style="left:43.8px;top:72.2px" width="8.8" height="9.2" viewBox="0 0 9 9" preserveAspectRatio="none">
<path d="M2.2 0.6h4.6v2h1.2l.8 2.6v3.2H.2V5.2L1 3.2h1.2z" fill="#4c5160"/></svg>
<svg class="ico" style="left:11.8px;top:753.3px" width="23.4" height="23.4" viewBox="0 0 24 24">
<defs><clipPath id="avc"><circle cx="12" cy="12" r="12"/></clipPath></defs>
<g clip-path="url(#avc)"><rect width="24" height="24" fill="#58595d"/>
<path d="M1 26c0-7.500 4-10.500 11-10.500s11 3 11 10.500z" fill="#737478"/>
<ellipse cx="12.3" cy="9.4" rx="3.9" ry="5" fill="#3a3033"/>
<path d="M8.200 7c.8-3.600 7.400-3.600 8.200 0 .2-2.200-1-5-4.100-5s-4.300 2.800-4.100 5z" fill="#1f1f22"/>
<path d="M10.400 14h3.800l-.6 3h-2.600z" fill="#4a4346"/></g></svg>
<div class="b" style="left:0;top:0;width:1px;height:788px;background:#0d1838"></div>
<div class="b" style="left:0;top:774px;width:14px;height:14px;background:radial-gradient(circle at 100% 0,rgba(8,20,47,0) 13px,#08142f 13.6px)"></div>
  <div class="t" style="left:49.5px;top:11.3px;font:700 10.5px/11.5px 'Liberation Sans', sans-serif;color:#a6a6a6;letter-spacing:-0.171px;">PetroBench</div>
<div class="t" style="left:49.5px;top:24.1px;font:400 9.5px/10.5px 'Liberation Sans', sans-serif;color:#a0a0a0;letter-spacing:0.061px;">Platform</div>
<div class="t" style="left:43.7px;top:59.1px;font:700 10.0px/11.0px 'Liberation Sans', sans-serif;color:#a6a6a6;letter-spacing:0.038px;">Exploration Division</div>
<div class="t" style="left:55.6px;top:71.9px;font:400 9.25px/10.25px 'Liberation Sans', sans-serif;color:#9a9a9a;letter-spacing:0.016px;">Division</div>
<div class="t" style="left:17.5px;top:100.5px;font:400 9.25px/10.25px 'Liberation Sans', sans-serif;color:#8e929c;letter-spacing:0.050px;">Platform</div>
<div class="t" style="left:35.0px;top:123.5px;font:400 10.5px/11.5px 'Liberation Sans', sans-serif;color:#a3a3a3;letter-spacing:0.054px;">Wells</div>
<div class="t" style="left:35.0px;top:149.7px;font:400 10.75px/11.75px 'Liberation Sans', sans-serif;color:#a3a3a3;">Company</div>
<div class="t" style="left:35.0px;top:175.9px;font:400 10.75px/11.75px 'Liberation Sans', sans-serif;color:#a3a3a3;letter-spacing:0.066px;">Contacts</div>
<div class="t" style="left:17.5px;top:204.6px;font:400 9.25px/10.25px 'Liberation Sans', sans-serif;color:#8e929c;letter-spacing:0.069px;">Apps</div>
<div class="t" style="left:35.0px;top:228.1px;font:400 10.25px/11.25px 'Liberation Sans', sans-serif;color:#a3a3a3;letter-spacing:0.066px;">RodSim</div>
<div class="t" style="left:35.0px;top:254.5px;font:400 10.75px/11.75px 'Liberation Sans', sans-serif;color:#a3a3a3;">Calculators</div>
<div class="t" style="left:35.0px;top:639.5px;font:400 10.75px/11.75px 'Liberation Sans', sans-serif;color:#a3a3a3;letter-spacing:-0.065px;">Admin Panel</div>
<div class="t" style="left:35.0px;top:666.0px;font:400 10.75px/11.75px 'Liberation Sans', sans-serif;color:#a3a3a3;letter-spacing:0.067px;">Platform</div>
<div class="t" style="left:35.0px;top:692.0px;font:400 10.75px/11.75px 'Liberation Sans', sans-serif;color:#a3a3a3;letter-spacing:0.057px;">Documentation</div>
<div class="t" style="left:35.0px;top:717.3px;font:400 11.0px/12.0px 'Liberation Sans', sans-serif;color:#a3a3a3;letter-spacing:-0.039px;">Support</div>
<div class="t" style="left:40.8px;top:754.3px;font:700 10.25px/11.25px 'Liberation Sans', sans-serif;color:#a6a6a6;letter-spacing:-0.013px;">John Henderson</div>
<div class="t" style="left:40.8px;top:765.9px;font:400 9.25px/10.25px 'Liberation Sans', sans-serif;color:#a0a0a0;letter-spacing:-0.065px;">HQ Admin</div>
</div></div>

<!-- ================= PANEL ================= -->
<div id="panel"><div class="in">
  <div class="b" style="left:664px;top:0;width:1px;height:788px;background:#dcdcdc"></div>
  <div class="hl" style="left:665px;top:65px;width:735px"></div>
  <div class="hl" style="left:665px;top:115px;width:735px"></div>
  <div class="hl" style="left:665px;top:143px;width:735px"></div>
  <div class="b" style="left:665px;top:144px;width:735px;height:70.5px;background:#f5f5f5"></div>
  <div class="hl" style="left:665px;top:214px;width:735px"></div>
  <div class="hl" style="left:665px;top:750px;width:735px"></div>
  <!-- back button -->
  <div class="b" style="left:676.6px;top:85.2px;width:56.2px;height:22.8px;border:1px solid #ebebeb;border-radius:4px"></div>
  <div class="b" style="left:741.6px;top:90.8px;width:1px;height:11.6px;background:#e5e5e5"></div>
  <div class="b" style="left:820.6px;top:90.8px;width:1px;height:11.6px;background:#e5e5e5"></div>
  <div class="b" style="left:1230.2px;top:88.2px;width:17.6px;height:17.2px;border:1px solid #ececec;border-radius:3px"></div>
  <div class="b" style="left:1276.8px;top:88.2px;width:17.6px;height:17.2px;border:1px solid #e4e4e4;border-radius:3px"></div>
  <div class="b" style="left:1303px;top:90.8px;width:1px;height:11.6px;background:#e5e5e5"></div>
  <div class="b" style="left:1312.3px;top:89.6px;width:23.6px;height:13.4px;background:#1447c8;border-radius:7px"></div>
  <div class="b" style="left:1323.4px;top:90.6px;width:11.4px;height:11.4px;background:#fff;border-radius:6px"></div>
  <!-- pills -->
  <div class="pill" style="left:691.4px;width:23.8px;background:#1447c8"></div>
  <div class="pill" style="left:719.9px;width:111.2px"></div>
  <div class="pill" style="left:835.7px;width:50.6px;background:#f5f5f5"></div>
  <div class="pill" style="left:891px;width:60px;background:#f5f5f5"></div>
  <div class="pill" style="left:956px;width:56.5px"></div>
  <div class="pill" style="left:1017.2px;width:46.8px;background:#f5f5f5"></div>
  <!-- sim run badge -->
  <div class="b" style="left:950.8px;top:194.4px;width:62px;height:12.3px;background:#1447c8;border-radius:2.5px"></div>
  <!-- avatars -->
  <div class="b av" style="left:950.8px;top:167.3px"></div>
  <div class="b av" style="left:1180.8px;top:167.3px"></div>
  <!-- section 1 -->
  <div class="b" style="left:677.2px;top:220.6px;width:722px;height:88.2px;border:1px solid #e8e8e8;border-radius:4px;background:#f5f5f5;overflow:hidden">
    <div class="b" style="left:0;top:0;width:722px;height:23.4px;background:#fafafa"></div>
    <div class="b" style="left:0;top:23.4px;width:722px;height:1px;background:#efefef"></div>
    <div class="b" style="left:0;top:44.6px;width:722px;height:1px;background:#ededed"></div>
    <div class="b" style="left:0;top:65.6px;width:722px;height:1px;background:#ededed"></div>
    <div class="b" style="left:-1px;top:23.4px;width:2.4px;height:66px;background:#1d4ed8"></div>
  </div>
  <!-- section 2 -->
  <div class="b" style="left:677.2px;top:312px;width:722px;height:197.2px;border:1px solid #e8e8e8;border-radius:4px;background:#fff;overflow:hidden">
    <div class="b" style="left:0;top:0;width:722px;height:23.2px;background:#fafafa"></div>
  </div>
  <div class="b" style="left:683.4px;top:341.3px;width:709.4px;height:77.6px;border:1px solid #e8e8e8;border-radius:4px;background:#fff;overflow:hidden">
    <div class="b" style="left:0;top:0;width:722px;height:20.8px;background:#fafafa"></div>
    <div class="b" style="left:0;top:39.2px;width:722px;height:1px;background:#e9e9e9"></div>
    <div class="b" style="left:0;top:58.2px;width:722px;height:1px;background:#e9e9e9"></div>
  </div>
  <div class="b" style="left:683.4px;top:424.6px;width:709.4px;height:77.4px;border:1px solid #e8e8e8;border-radius:4px;background:#fff;overflow:hidden">
    <div class="b" style="left:0;top:0;width:722px;height:20.6px;background:#fafafa"></div>
    <div class="b" style="left:0;top:38px;width:722px;height:1px;background:#e9e9e9"></div>
    <div class="b" style="left:0;top:57px;width:722px;height:1px;background:#e9e9e9"></div>
  </div>
  <!-- restore -->
  <div class="b" style="left:1306.6px;top:757.8px;width:92.6px;height:23.2px;background:#1447c8;border-radius:3px"></div>
  <svg class="ico" style="left:1388.0px;top:17.6px;" width="10.6" height="10.6" viewBox="0 0 24 24" stroke="#4a4a4a" stroke-width="2.2"><path d="M18 6 6 18"/><path d="m6 6 12 12"/></svg>
<svg class="ico" style="left:684.9px;top:91.3px;" width="10.6" height="10.6" viewBox="0 0 24 24" stroke="#1a1a1a" stroke-width="2.5"><path d="m12 19-7-7 7-7"/><path d="M19 12H5"/></svg>
<svg class="ico" style="left:1234.1px;top:91.9px;" width="9.8" height="9.8" viewBox="0 0 24 24" stroke="#b0b0b0" stroke-width="2.6"><path d="m18 15-6-6-6 6"/></svg>
<svg class="ico" style="left:1280.7px;top:91.9px;" width="9.8" height="9.8" viewBox="0 0 24 24" stroke="#1a1a1a" stroke-width="2.7"><path d="m6 9 6 6 6-6"/></svg>
<svg class="ico" style="left:676.6px;top:125.2px;" width="8.8" height="8.8" viewBox="0 0 24 24" stroke="#6a6a6a" stroke-width="2.4"><polygon points="22 3 2 3 10 12.46 10 19 14 21 14 12.46 22 3"/></svg>
<svg class="ico" style="left:686.9px;top:228.4px;" width="8.8" height="8.8" viewBox="0 0 24 24" stroke="#6a6a6a" stroke-width="2.4"><path d="m6 9 6 6 6-6"/></svg>
<svg class="ico" style="left:686.9px;top:319.5px;" width="8.8" height="8.8" viewBox="0 0 24 24" stroke="#6a6a6a" stroke-width="2.4"><path d="m6 9 6 6 6-6"/></svg>
<svg class="ico" style="left:1314.7px;top:764.1px;" width="10.4" height="10.4" viewBox="0 0 24 24" stroke="#fff" stroke-width="2.1"><path d="M3 12a9 9 0 1 0 9-9 9.75 9.75 0 0 0-6.74 2.74L3 8"/><path d="M3 3v5h5"/></svg>
<svg class="ico" style="left:950.8px;top:167.2px" width="11.6" height="11.6" viewBox="0 0 24 24">
<circle cx="12" cy="12" r="12" fill="#8f8a8a"/><ellipse cx="12" cy="9.6" rx="4.4" ry="5.2" fill="#b98b80"/>
<path d="M3 24c0-6 4-8.5 9-8.5s9 2.500 9 8.500z" fill="#a8adb8"/><path d="M7.600 7c1-3.400 7.800-3.400 8.800 0 0-2-1-4.600-4.400-4.600s-4.400 2.600-4.400 4.600z" fill="#4a4040"/></svg>
<svg class="ico" style="left:1180.8px;top:167.2px" width="11.6" height="11.6" viewBox="0 0 24 24">
<circle cx="12" cy="12" r="12" fill="#8f8a8a"/><ellipse cx="12" cy="9.6" rx="4.4" ry="5.2" fill="#b98b80"/>
<path d="M3 24c0-6 4-8.5 9-8.5s9 2.500 9 8.500z" fill="#a8adb8"/><path d="M7.600 7c1-3.400 7.800-3.400 8.800 0 0-2-1-4.600-4.400-4.600s-4.400 2.600-4.400 4.600z" fill="#4a4040"/></svg>
  <div class="t" style="left:679.9px;top:17.4px;font:700 11.75px/12.75px 'Liberation Sans', sans-serif;color:#111;letter-spacing:-0.040px;">Version Compare</div>
<div class="t" style="left:679.9px;top:37.1px;font:400 11.0px/12.0px 'Liberation Sans', sans-serif;color:#808080;">Side-by-side comparison of selected versions.</div>
<div class="t" style="left:700.9px;top:91.4px;font:400 10.5px/11.5px 'Liberation Sans', sans-serif;color:#0a0a0a;letter-spacing:-0.081px;-webkit-text-stroke:0.25px #0a0a0a;">Back</div>
<div class="t" style="left:751.4px;top:91.2px;font:400 10.0px/11.0px 'Liberation Sans', sans-serif;color:#0a0a0a;letter-spacing:0.044px;-webkit-text-stroke:0.25px #0a0a0a;">v1 vs Current</div>
<div class="t" style="left:830.4px;top:91.2px;font:400 10px/11px 'Liberation Sans', sans-serif;color:#e03131;letter-spacing:-0.806px;">~5</div>
<div class="t" style="left:1256.8px;top:92.3px;font:400 8.0px/9.0px 'Liberation Sans', sans-serif;color:#a3a3a3;letter-spacing:-0.013px;">–/5</div>
<div class="t" style="left:1341.9px;top:91.4px;font:400 9.25px/10.25px 'Liberation Sans', sans-serif;color:#0a0a0a;letter-spacing:0.011px;-webkit-text-stroke:0.2px #0a0a0a;">Changes only</div>
<div class="t" style="left:698.6px;top:125.9px;font:400 8.4px/9.4px 'Liberation Sans', sans-serif;color:#ffffff;letter-spacing:0.094px;-webkit-text-stroke:0.2px #fff;">All</div>
<div class="t" style="left:727.4px;top:125.9px;font:400 8.4px/9.4px 'Liberation Sans', sans-serif;color:#0a0a0a;letter-spacing:0.076px;-webkit-text-stroke:0.2px #0a0a0a;">Simulation Preferences</div>
<div class="t" style="left:819.0px;top:125.9px;font:400 8.4px/9.4px 'Liberation Sans', sans-serif;color:#525252;">3</div>
<div class="t" style="left:843.0px;top:125.9px;font:400 8.4px/9.4px 'Liberation Sans', sans-serif;color:#7d7d7d;letter-spacing:-0.057px;">Well Data</div>
<div class="t" style="left:898.3px;top:125.9px;font:400 8.4px/9.4px 'Liberation Sans', sans-serif;color:#7d7d7d;letter-spacing:0.017px;">Tubing Data</div>
<div class="t" style="left:963.0px;top:125.9px;font:400 8.4px/9.4px 'Liberation Sans', sans-serif;color:#0a0a0a;letter-spacing:-0.142px;-webkit-text-stroke:0.2px #0a0a0a;">Rod Data</div>
<div class="t" style="left:1000.8px;top:125.9px;font:400 8.4px/9.4px 'Liberation Sans', sans-serif;color:#525252;">2</div>
<div class="t" style="left:1024.2px;top:125.9px;font:400 8.4px/9.4px 'Liberation Sans', sans-serif;color:#7d7d7d;letter-spacing:-0.198px;">IPR Data</div>
<div class="t" style="left:676.6px;top:150.5px;font:700 8.0px/9.0px 'Liberation Sans', sans-serif;color:#737373;letter-spacing:0.073px;">FIELD</div>
<div class="t" style="left:676.6px;top:168.8px;font:400 7.75px/8.75px 'Liberation Sans', sans-serif;color:#a3a3a3;letter-spacing:-0.025px;">Created by</div>
<div class="t" style="left:676.6px;top:183.2px;font:400 7.5px/8.5px 'Liberation Sans', sans-serif;color:#a3a3a3;letter-spacing:-0.081px;">Date</div>
<div class="t" style="left:676.6px;top:195.6px;font:400 7.75px/8.75px 'Liberation Sans', sans-serif;color:#a3a3a3;letter-spacing:0.039px;">Trigger</div>
<div class="t" style="left:951.0px;top:150.1px;font:700 10px/11px 'Liberation Sans', sans-serif;color:#0a0a0a;letter-spacing:-0.6px;">v1</div>
<div class="t" style="left:967.0px;top:168.9px;font:400 8.5px/9.5px 'Liberation Sans', sans-serif;color:#737373;letter-spacing:-0.030px;">John Henderson</div>
<div class="t" style="left:950.8px;top:183.7px;font:400 7.5px/8.5px 'Liberation Sans', sans-serif;color:#737373;letter-spacing:0.010px;">Feb 22, 2026, 12:20 PM</div>
<div class="t" style="left:955.8px;top:196.8px;font:400 7.5px/8.5px 'Liberation Sans', sans-serif;color:#fff;letter-spacing:0.065px;">Simulation Run</div>
<div class="t" style="left:1181.0px;top:150.1px;font:700 10.0px/11.0px 'Liberation Sans', sans-serif;color:#0a0a0a;letter-spacing:-0.044px;">Current (v2)</div>
<div class="t" style="left:1197.0px;top:168.9px;font:400 8.5px/9.5px 'Liberation Sans', sans-serif;color:#737373;letter-spacing:0.008px;">John Henderson</div>
<div class="t" style="left:1180.8px;top:183.5px;font:400 7.75px/8.75px 'Liberation Sans', sans-serif;color:#737373;letter-spacing:0.014px;">Feb 24, 2026, 9:45 AM</div>
<div class="t" style="left:702.4px;top:228.3px;font:400 9.0px/10.0px 'Liberation Sans', sans-serif;color:#0a0a0a;-webkit-text-stroke:0.3px #0a0a0a;">Simulation Preferences</div>
<div class="t" style="left:1379.8px;top:228.0px;font:400 9.25px/10.25px 'Liberation Sans', sans-serif;color:#e03131;letter-spacing:-0.747px;">~3</div>
<div class="t" style="left:688.0px;top:250.3px;font:400 9.25px/10.25px 'Liberation Sans', sans-serif;color:#404040;letter-spacing:-0.009px;">Step Length</div>
<div class="t" style="left:688.0px;top:271.4px;font:400 9.25px/10.25px 'Liberation Sans', sans-serif;color:#404040;">Target Pump Intake Pressure</div>
<div class="t" style="left:688.0px;top:292.5px;font:400 9.0px/10.0px 'Liberation Sans', sans-serif;color:#404040;letter-spacing:0.050px;">Target Stroke Rate (SPM)</div>
<div class="t" style="left:954.0px;top:251.0px;font:700 7.9px/8.9px 'DejaVu Sans Mono', 'Liberation Mono', monospace;color:#e0383e;">50.00</div>
<div class="t" style="left:954.0px;top:272.1px;font:700 7.9px/8.9px 'DejaVu Sans Mono', 'Liberation Mono', monospace;color:#e0383e;">105.40</div>
<div class="t" style="left:954.0px;top:293.1px;font:700 7.9px/8.9px 'DejaVu Sans Mono', 'Liberation Mono', monospace;color:#e0383e;">4.50</div>
<div class="t" style="left:1177.7px;top:251.0px;font:700 7.9px/8.9px 'DejaVu Sans Mono', 'Liberation Mono', monospace;color:#12805c;">10.00</div>
<div class="t" style="left:1177.7px;top:272.1px;font:700 7.9px/8.9px 'DejaVu Sans Mono', 'Liberation Mono', monospace;color:#12805c;">120.00</div>
<div class="t" style="left:1177.7px;top:293.1px;font:700 7.9px/8.9px 'DejaVu Sans Mono', 'Liberation Mono', monospace;color:#12805c;">6.00</div>
<div class="t" style="left:702.4px;top:319.7px;font:400 8.5px/9.5px 'Liberation Sans', sans-serif;color:#0a0a0a;letter-spacing:-0.032px;-webkit-text-stroke:0.3px #0a0a0a;">Rod Data</div>
<div class="t" style="left:1379.8px;top:319.1px;font:400 9.25px/10.25px 'Liberation Sans', sans-serif;color:#e03131;letter-spacing:-0.747px;">~2</div>
<div class="t" style="left:692.8px;top:348.9px;font:400 7.75px/8.75px 'Liberation Sans', sans-serif;color:#0a0a0a;letter-spacing:-0.047px;-webkit-text-stroke:0.3px #0a0a0a;">Rod 1</div>
<div class="t" style="left:718.1px;top:347.4px;font:400 9.5px/10.5px 'Liberation Sans', sans-serif;color:#dc2626;">*</div>
<div class="t" style="left:756.5px;top:368.2px;font:400 8.4px/9.4px 'Liberation Sans', sans-serif;color:#737373;letter-spacing:-0.113px;">Class</div>
<div class="t" style="left:808.2px;top:368.2px;font:400 8.4px/9.4px 'Liberation Sans', sans-serif;color:#0a0a0a;letter-spacing:0.045px;-webkit-text-stroke:0.25px #0a0a0a;">Diameter</div>
<div class="t" style="left:861.3px;top:368.2px;font:400 8.4px/9.4px 'Liberation Sans', sans-serif;color:#737373;letter-spacing:-0.095px;">Grade</div>
<div class="t" style="left:901.0px;top:368.2px;font:400 8.4px/9.4px 'Liberation Sans', sans-serif;color:#737373;letter-spacing:0.068px;">Guide Type</div>
<div class="t" style="left:964.2px;top:368.2px;font:400 8.4px/9.4px 'Liberation Sans', sans-serif;color:#737373;letter-spacing:0.095px;">Length</div>
<div class="t" style="left:1015.6px;top:368.2px;font:400 8.4px/9.4px 'Liberation Sans', sans-serif;color:#737373;letter-spacing:0.214px;">Manufacturer</div>
<div class="t" style="left:1089.7px;top:368.2px;font:400 8.4px/9.4px 'Liberation Sans', sans-serif;color:#737373;letter-spacing:0.014px;">Polished Rod Diameter</div>
<div class="t" style="left:1202.2px;top:368.2px;font:400 8.4px/9.4px 'Liberation Sans', sans-serif;color:#737373;letter-spacing:-0.015px;">Rod Type</div>
<div class="t" style="left:1270.5px;top:368.2px;font:400 8.4px/9.4px 'Liberation Sans', sans-serif;color:#737373;letter-spacing:0.032px;">Sort Order</div>
<div class="t" style="left:1329.7px;top:368.2px;font:400 8.4px/9.4px 'Liberation Sans', sans-serif;color:#737373;letter-spacing:0.048px;">Type</div>
<div class="t" style="left:689.9px;top:386.1px;font:400 8.5px/9.5px 'Liberation Sans', sans-serif;color:#525252;">v1</div>
<div class="t" style="left:756.5px;top:386.6px;font:400 7.9px/8.9px 'DejaVu Sans Mono', 'Liberation Mono', monospace;color:#737373;">Branded</div>
<div class="t" style="left:808.8px;top:386.6px;font:700 7.9px/8.9px 'DejaVu Sans Mono', 'Liberation Mono', monospace;color:#e0383e;">1</div>
<div class="t" style="left:861.3px;top:386.6px;font:400 7.9px/8.9px 'DejaVu Sans Mono', 'Liberation Mono', monospace;color:#737373;">EL</div>
<div class="t" style="left:900.7px;top:386.6px;font:400 7.9px/8.9px 'DejaVu Sans Mono', 'Liberation Mono', monospace;color:#737373;">Molded AU</div>
<div class="t" style="left:964.2px;top:386.6px;font:400 7.9px/8.9px 'DejaVu Sans Mono', 'Liberation Mono', monospace;color:#737373;">2250.00</div>
<div class="t" style="left:1015.6px;top:386.6px;font:400 7.9px/8.9px 'DejaVu Sans Mono', 'Liberation Mono', monospace;color:#737373;">Weatherford</div>
<div class="t" style="left:1089.7px;top:386.6px;font:400 7.9px/8.9px 'DejaVu Sans Mono', 'Liberation Mono', monospace;color:#737373;">–</div>
<div class="t" style="left:1202.2px;top:386.6px;font:400 7.9px/8.9px 'DejaVu Sans Mono', 'Liberation Mono', monospace;color:#737373;">Sucker Rod</div>
<div class="t" style="left:1270.5px;top:386.6px;font:400 7.9px/8.9px 'DejaVu Sans Mono', 'Liberation Mono', monospace;color:#737373;">1</div>
<div class="t" style="left:1329.7px;top:386.6px;font:400 7.9px/8.9px 'DejaVu Sans Mono', 'Liberation Mono', monospace;color:#737373;">Sucker Rod</div>
<div class="t" style="left:689.9px;top:404.7px;font:400 8.5px/9.5px 'Liberation Sans', sans-serif;color:#525252;letter-spacing:0.087px;">Current (v2)</div>
<div class="t" style="left:756.5px;top:405.4px;font:400 7.9px/8.9px 'DejaVu Sans Mono', 'Liberation Mono', monospace;color:#737373;">Branded</div>
<div class="t" style="left:808.8px;top:405.4px;font:700 7.9px/8.9px 'DejaVu Sans Mono', 'Liberation Mono', monospace;color:#12805c;">1 1/8</div>
<div class="t" style="left:861.3px;top:405.4px;font:400 7.9px/8.9px 'DejaVu Sans Mono', 'Liberation Mono', monospace;color:#737373;">EL</div>
<div class="t" style="left:900.7px;top:405.4px;font:400 7.9px/8.9px 'DejaVu Sans Mono', 'Liberation Mono', monospace;color:#737373;">Molded AU</div>
<div class="t" style="left:964.2px;top:405.4px;font:400 7.9px/8.9px 'DejaVu Sans Mono', 'Liberation Mono', monospace;color:#737373;">2250.00</div>
<div class="t" style="left:1015.6px;top:405.4px;font:400 7.9px/8.9px 'DejaVu Sans Mono', 'Liberation Mono', monospace;color:#737373;">Weatherford</div>
<div class="t" style="left:1089.7px;top:405.4px;font:400 7.9px/8.9px 'DejaVu Sans Mono', 'Liberation Mono', monospace;color:#737373;">–</div>
<div class="t" style="left:1202.2px;top:405.4px;font:400 7.9px/8.9px 'DejaVu Sans Mono', 'Liberation Mono', monospace;color:#737373;">Sucker Rod</div>
<div class="t" style="left:1270.5px;top:405.4px;font:400 7.9px/8.9px 'DejaVu Sans Mono', 'Liberation Mono', monospace;color:#737373;">1</div>
<div class="t" style="left:1329.7px;top:405.4px;font:400 7.9px/8.9px 'DejaVu Sans Mono', 'Liberation Mono', monospace;color:#737373;">Sucker Rod</div>
<div class="t" style="left:692.8px;top:431.4px;font:400 8.0px/9.0px 'Liberation Sans', sans-serif;color:#0a0a0a;letter-spacing:-0.015px;-webkit-text-stroke:0.3px #0a0a0a;">Rod 2</div>
<div class="t" style="left:719.5px;top:430.6px;font:400 9.5px/10.5px 'Liberation Sans', sans-serif;color:#dc2626;">*</div>
<div class="t" style="left:756.8px;top:451.0px;font:400 8.4px/9.4px 'Liberation Sans', sans-serif;color:#737373;letter-spacing:-0.113px;">Class</div>
<div class="t" style="left:809.3px;top:451.0px;font:400 8.4px/9.4px 'Liberation Sans', sans-serif;color:#0a0a0a;letter-spacing:0.045px;-webkit-text-stroke:0.25px #0a0a0a;">Diameter</div>
<div class="t" style="left:862.6px;top:451.0px;font:400 8.4px/9.4px 'Liberation Sans', sans-serif;color:#737373;letter-spacing:-0.095px;">Grade</div>
<div class="t" style="left:902.6px;top:451.0px;font:400 8.4px/9.4px 'Liberation Sans', sans-serif;color:#737373;letter-spacing:0.068px;">Guide Type</div>
<div class="t" style="left:966.3px;top:451.0px;font:400 8.4px/9.4px 'Liberation Sans', sans-serif;color:#737373;letter-spacing:0.095px;">Length</div>
<div class="t" style="left:1013.0px;top:451.0px;font:400 8.4px/9.4px 'Liberation Sans', sans-serif;color:#737373;letter-spacing:0.214px;">Manufacturer</div>
<div class="t" style="left:1087.6px;top:451.0px;font:400 8.4px/9.4px 'Liberation Sans', sans-serif;color:#737373;letter-spacing:0.014px;">Polished Rod Diameter</div>
<div class="t" style="left:1200.6px;top:451.0px;font:400 8.4px/9.4px 'Liberation Sans', sans-serif;color:#737373;letter-spacing:-0.015px;">Rod Type</div>
<div class="t" style="left:1269.7px;top:451.0px;font:400 8.4px/9.4px 'Liberation Sans', sans-serif;color:#737373;letter-spacing:0.032px;">Sort Order</div>
<div class="t" style="left:1329.1px;top:451.0px;font:400 8.4px/9.4px 'Liberation Sans', sans-serif;color:#737373;letter-spacing:0.048px;">Type</div>
<div class="t" style="left:689.9px;top:469.2px;font:400 8.5px/9.5px 'Liberation Sans', sans-serif;color:#525252;">v1</div>
<div class="t" style="left:756.8px;top:469.8px;font:400 7.9px/8.9px 'DejaVu Sans Mono', 'Liberation Mono', monospace;color:#737373;">Branded</div>
<div class="t" style="left:809.9px;top:469.8px;font:700 7.9px/8.9px 'DejaVu Sans Mono', 'Liberation Mono', monospace;color:#e0383e;">1</div>
<div class="t" style="left:862.6px;top:469.8px;font:400 7.9px/8.9px 'DejaVu Sans Mono', 'Liberation Mono', monospace;color:#737373;">EL</div>
<div class="t" style="left:902.3px;top:469.8px;font:400 7.9px/8.9px 'DejaVu Sans Mono', 'Liberation Mono', monospace;color:#737373;">Molded AU</div>
<div class="t" style="left:966.3px;top:469.8px;font:400 7.9px/8.9px 'DejaVu Sans Mono', 'Liberation Mono', monospace;color:#737373;">750.00</div>
<div class="t" style="left:1013.0px;top:469.8px;font:400 7.9px/8.9px 'DejaVu Sans Mono', 'Liberation Mono', monospace;color:#737373;">Weatherford</div>
<div class="t" style="left:1087.6px;top:469.8px;font:400 7.9px/8.9px 'DejaVu Sans Mono', 'Liberation Mono', monospace;color:#737373;">–</div>
<div class="t" style="left:1200.6px;top:469.8px;font:400 7.9px/8.9px 'DejaVu Sans Mono', 'Liberation Mono', monospace;color:#737373;">Sucker Rod</div>
<div class="t" style="left:1269.7px;top:469.8px;font:400 7.9px/8.9px 'DejaVu Sans Mono', 'Liberation Mono', monospace;color:#737373;">2</div>
<div class="t" style="left:1329.1px;top:469.8px;font:400 7.9px/8.9px 'DejaVu Sans Mono', 'Liberation Mono', monospace;color:#737373;">Sucker Rod</div>
<div class="t" style="left:689.9px;top:488.1px;font:400 8.5px/9.5px 'Liberation Sans', sans-serif;color:#525252;letter-spacing:0.087px;">Current (v2)</div>
<div class="t" style="left:756.8px;top:488.6px;font:400 7.9px/8.9px 'DejaVu Sans Mono', 'Liberation Mono', monospace;color:#737373;">Branded</div>
<div class="t" style="left:809.9px;top:488.6px;font:700 7.9px/8.9px 'DejaVu Sans Mono', 'Liberation Mono', monospace;color:#12805c;">1 1/8</div>
<div class="t" style="left:862.6px;top:488.6px;font:400 7.9px/8.9px 'DejaVu Sans Mono', 'Liberation Mono', monospace;color:#737373;">EL</div>
<div class="t" style="left:902.3px;top:488.6px;font:400 7.9px/8.9px 'DejaVu Sans Mono', 'Liberation Mono', monospace;color:#737373;">Molded AU</div>
<div class="t" style="left:966.3px;top:488.6px;font:400 7.9px/8.9px 'DejaVu Sans Mono', 'Liberation Mono', monospace;color:#737373;">750.00</div>
<div class="t" style="left:1013.0px;top:488.6px;font:400 7.9px/8.9px 'DejaVu Sans Mono', 'Liberation Mono', monospace;color:#737373;">Weatherford</div>
<div class="t" style="left:1087.6px;top:488.6px;font:400 7.9px/8.9px 'DejaVu Sans Mono', 'Liberation Mono', monospace;color:#737373;">–</div>
<div class="t" style="left:1200.6px;top:488.6px;font:400 7.9px/8.9px 'DejaVu Sans Mono', 'Liberation Mono', monospace;color:#737373;">Sucker Rod</div>
<div class="t" style="left:1269.7px;top:488.6px;font:400 7.9px/8.9px 'DejaVu Sans Mono', 'Liberation Mono', monospace;color:#737373;">2</div>
<div class="t" style="left:1329.1px;top:488.6px;font:400 7.9px/8.9px 'DejaVu Sans Mono', 'Liberation Mono', monospace;color:#737373;">Sucker Rod</div>
<div class="t" style="left:676.6px;top:764.4px;font:400 9.25px/10.25px 'Liberation Sans', sans-serif;color:#737373;letter-spacing:0.016px;">Comparing v1 with Current</div>
<div class="t" style="left:1330.1px;top:764.1px;font:400 10.5px/11.5px 'Liberation Sans', sans-serif;color:#fff;letter-spacing:-0.038px;-webkit-text-stroke:0.25px #fff;">Restore to v1</div>
</div></div>
</body>
</html>
